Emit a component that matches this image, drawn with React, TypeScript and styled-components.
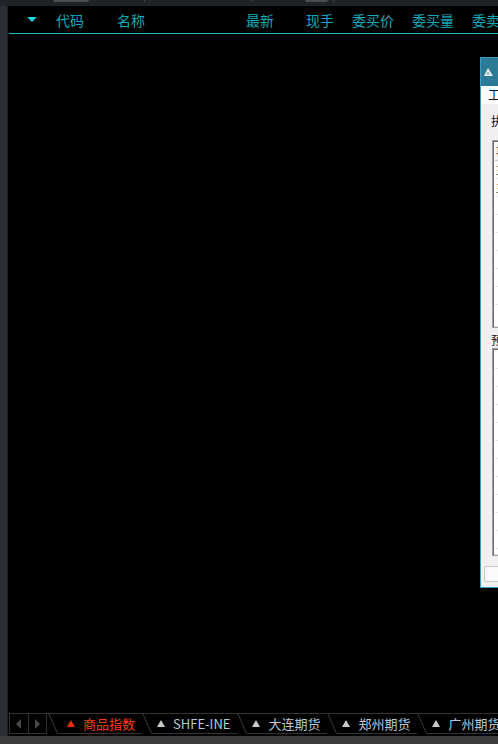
import React from "react"
import styled, { createGlobalStyle } from "styled-components"

const GlobalStyle = createGlobalStyle`
  html, body {
    margin: 0;
    padding: 0;
    background: #1f2226;
    overflow: hidden;
  }
  #root {
    width: 498px;
    height: 744px;
  }
`

const columns = [
    { label: "代码", align: "left" },
    { label: "名称", align: "left" },
    { label: "最新", align: "right" },
    { label: "现手", align: "right" },
    { label: "委买价", align: "right" },
    { label: "委买量", align: "right" },
    { label: "委卖价", align: "right" },
]

const tabs = [
    { label: "商品指数", active: true },
    { label: "SHFE-INE", active: false },
    { label: "大连期货", active: false },
    { label: "郑州期货", active: false },
    { label: "广州期货", active: false },
]

const listRows = ["事件", "主力", "主连", "", "", "", "", "", ""]

export default function App() {
    return (
        <Screen>
            <GlobalStyle />
            <TopStrip>
                <Knob $gap={53} $w={36} />
                <Tick $gap={55} />
                <Tick $gap={107} />
                <Knob $gap={52} $w={23} />
                <Tick $gap={5} />
            </TopStrip>
            <Main>
                <Side />
                <Content>
                    <Header>
                        <SortCell>
                            <DownArrow />
                        </SortCell>
                        {columns.map((c) => (
                            <HeadCell key={c.label} $align={c.align}>
                                {c.label}
                            </HeadCell>
                        ))}
                    </Header>
                    <Body />
                    <TabBar>
                        <ArrowBox>
                            <ArrowBtn>
                                <SmallArrow $dir="left" />
                            </ArrowBtn>
                            <ArrowBtn>
                                <SmallArrow $dir="right" />
                            </ArrowBtn>
                        </ArrowBox>
                        {tabs.map((t) => (
                            <Tab key={t.label}>
                                <Slant width="10" height="21" viewBox="0 0 10 21">
                                    <line x1="0.5" y1="0" x2="9.5" y2="20.5" stroke="#3a3a3a" strokeWidth="1" />
                                </Slant>
                                <TabInner>
                                    <TabMark $active={t.active} />
                                    <TabLabel $active={t.active}>{t.label}</TabLabel>
                                </TabInner>
                            </Tab>
                        ))}
                    </TabBar>
                </Content>
            </Main>
            <BottomStrip />

            <Dialog>
                <TitleBar>
                    <svg width="9" height="8" viewBox="0 0 9 8">
                        <polygon points="4,0 9,8 0,8" fill="#e8eef2" />
                        <polygon points="4,3 6,6.5 2,6.5" fill="#9bb8c6" />
                    </svg>
                </TitleBar>
                <MenuRow>工具</MenuRow>
                <DlgBody>
                    <FieldLabel>执行列表</FieldLabel>
                    <ListBox $h={188}>
                        {listRows.map((r, i) => (
                            <ListRow key={i} $head={i === 0}>
                                {r}
                            </ListRow>
                        ))}
                    </ListBox>
                    <FieldLabel $tight>预警列表</FieldLabel>
                    <ListBox $h={208}>
                        {Array.from({ length: 11 }).map((_, i) => (
                            <ListRow key={i} $head={false} />
                        ))}
                    </ListBox>
                    <CheckRow />
                </DlgBody>
            </Dialog>
        </Screen>
    )
}

const Screen = styled.div`
    position: relative;
    width: 498px;
    height: 744px;
    display: flex;
    flex-direction: column;
    overflow: hidden;
    font-family: "Noto Sans CJK SC", "Liberation Sans", sans-serif;
`

const TopStrip = styled.div`
    height: 6px;
    flex-shrink: 0;
    display: flex;
    align-items: flex-start;
    background: #1f2226;
`

const Knob = styled.div<{ $gap: number; $w: number }>`
    margin-left: ${(p) => p.$gap}px;
    width: ${(p) => p.$w}px;
    height: 2px;
    background: #4a4c50;
    border-radius: 0 0 4px 4px;
`

const Tick = styled.div<{ $gap: number }>`
    margin-left: ${(p) => p.$gap}px;
    width: 1px;
    height: 2px;
    background: #3c3f43;
`

const Main = styled.div`
    flex: 1;
    display: flex;
    min-height: 0;
`

const Side = styled.div`
    width: 7px;
    border-right: 1px solid #1c1e21;
    background: #2b2e32;
`

const Content = styled.div`
    flex: 1;
    display: flex;
    flex-direction: column;
    background: #000;
    overflow: hidden;
`

const Header = styled.div`
    height: 27px;
    flex-shrink: 0;
    border-bottom: 1px solid #1cb6c4;
    margin-left: 1px;
    display: grid;
    grid-template-columns: 47px 61px 97px repeat(5, 60px);
    align-items: center;
    font-size: 14px;
    color: #14a8b6;
    white-space: nowrap;
`

const SortCell = styled.div`
    display: flex;
    padding-left: 18px;
`

const DownArrow = styled.div`
    width: 0;
    height: 0;
    border-left: 5px solid transparent;
    border-right: 5px solid transparent;
    border-top: 5px solid #1fd2e0;
`

const HeadCell = styled.div<{ $align: string }>`
    text-align: ${(p) => p.$align};
`

const Body = styled.div`
    flex: 1;
`

const TabBar = styled.div`
    height: 21px;
    flex-shrink: 0;
    margin-bottom: 2px;
    display: flex;
    white-space: nowrap;
`

const ArrowBox = styled.div`
    margin-left: 1px;
    width: 36px;
    display: flex;
    border: 1px solid #333;
    flex-shrink: 0;
`

const ArrowBtn = styled.div`
    flex: 1;
    display: flex;
    align-items: center;
    justify-content: center;
    & + & {
        border-left: 1px solid #333;
    }
`

const SmallArrow = styled.div<{ $dir: "left" | "right" }>`
    width: 0;
    height: 0;
    border-top: 5px solid transparent;
    border-bottom: 5px solid transparent;
    ${(p) => (p.$dir === "left" ? "border-right: 5px solid #4a4a4a;" : "border-left: 5px solid #4a4a4a;")}
`

const Tab = styled.div`
    display: flex;
    flex-shrink: 0;
    border-top: 1px solid #333;
    &:nth-child(2) {
        padding-left: 1px;
    }
    &:nth-child(2) > div {
        padding-left: 9px;
    }
`

const Slant = styled.svg`
    display: block;
    flex-shrink: 0;
    margin-top: -1px;
`

const TabInner = styled.div`
    display: flex;
    align-items: center;
    gap: 8px;
    padding: 0 7px 0 5px;
    border-bottom: 1px solid #333;
`

const TabMark = styled.div<{ $active: boolean }>`
    width: 0;
    height: 0;
    border-left: 4px solid transparent;
    border-right: 4px solid transparent;
    border-bottom: 7px solid ${(p) => (p.$active ? "#ff2a00" : "#c8c8c8")};
`

const TabLabel = styled.span<{ $active: boolean }>`
    font-size: 13px;
    line-height: 18px;
    color: ${(p) => (p.$active ? "#ff3a18" : "#b8c8da")};
`

const BottomStrip = styled.div`
    height: 8px;
    flex-shrink: 0;
    background: #3b3b3b;
`

const Dialog = styled.div`
    position: absolute;
    left: 480px;
    top: 57px;
    width: 260px;
    height: 529px;
    border: 1px solid #3d9bc4;
    background: #f0f0f0;
    display: flex;
    flex-direction: column;
`

const TitleBar = styled.div`
    height: 28px;
    flex-shrink: 0;
    background: #2c7b97;
    display: flex;
    align-items: center;
    padding-left: 3px;
`

const MenuRow = styled.div`
    height: 18px;
    flex-shrink: 0;
    background: #fff;
    padding-left: 7px;
    font-size: 12px;
    line-height: 18px;
    color: #111;
`

const DlgBody = styled.div`
    display: flex;
    flex-direction: column;
    padding: 10px 0 0 10px;
`

const FieldLabel = styled.div<{ $tight?: boolean }>`
    font-size: 12px;
    line-height: 14px;
    color: #111;
    margin-top: ${(p) => (p.$tight ? "5px" : "0")};
`

const ListBox = styled.div<{ $h: number }>`
    margin-top: ${(p) => (p.$h > 200 ? "1px" : "12px")};
    margin-left: 1px;
    height: ${(p) => p.$h}px;
    border: 1px solid #a0a0a0;
    box-shadow: inset 1px 1px 0 #6a6a6a, inset -1px -1px 0 #e3e3e3;
    background: #fff;
    padding: 2px;
    box-sizing: border-box;
    overflow: hidden;
`

const ListRow = styled.div<{ $head: boolean }>`
    height: 18px;
    box-sizing: border-box;
    border-bottom: 1px solid ${(p) => (p.$head ? "#c8c8c8" : "#e4e4e4")};
    background: ${(p) => (p.$head ? "#f4f4f4" : "#fff")};
    font-size: 11px;
    line-height: 17px;
    padding-left: 1px;
    color: #222;
`

const CheckRow = styled.div`
    margin-top: 10px;
    margin-left: -7px;
    width: 40px;
    height: 14px;
    border: 1px solid #c4c4c4;
    border-radius: 2px;
    background: #fbfbfb;
`
